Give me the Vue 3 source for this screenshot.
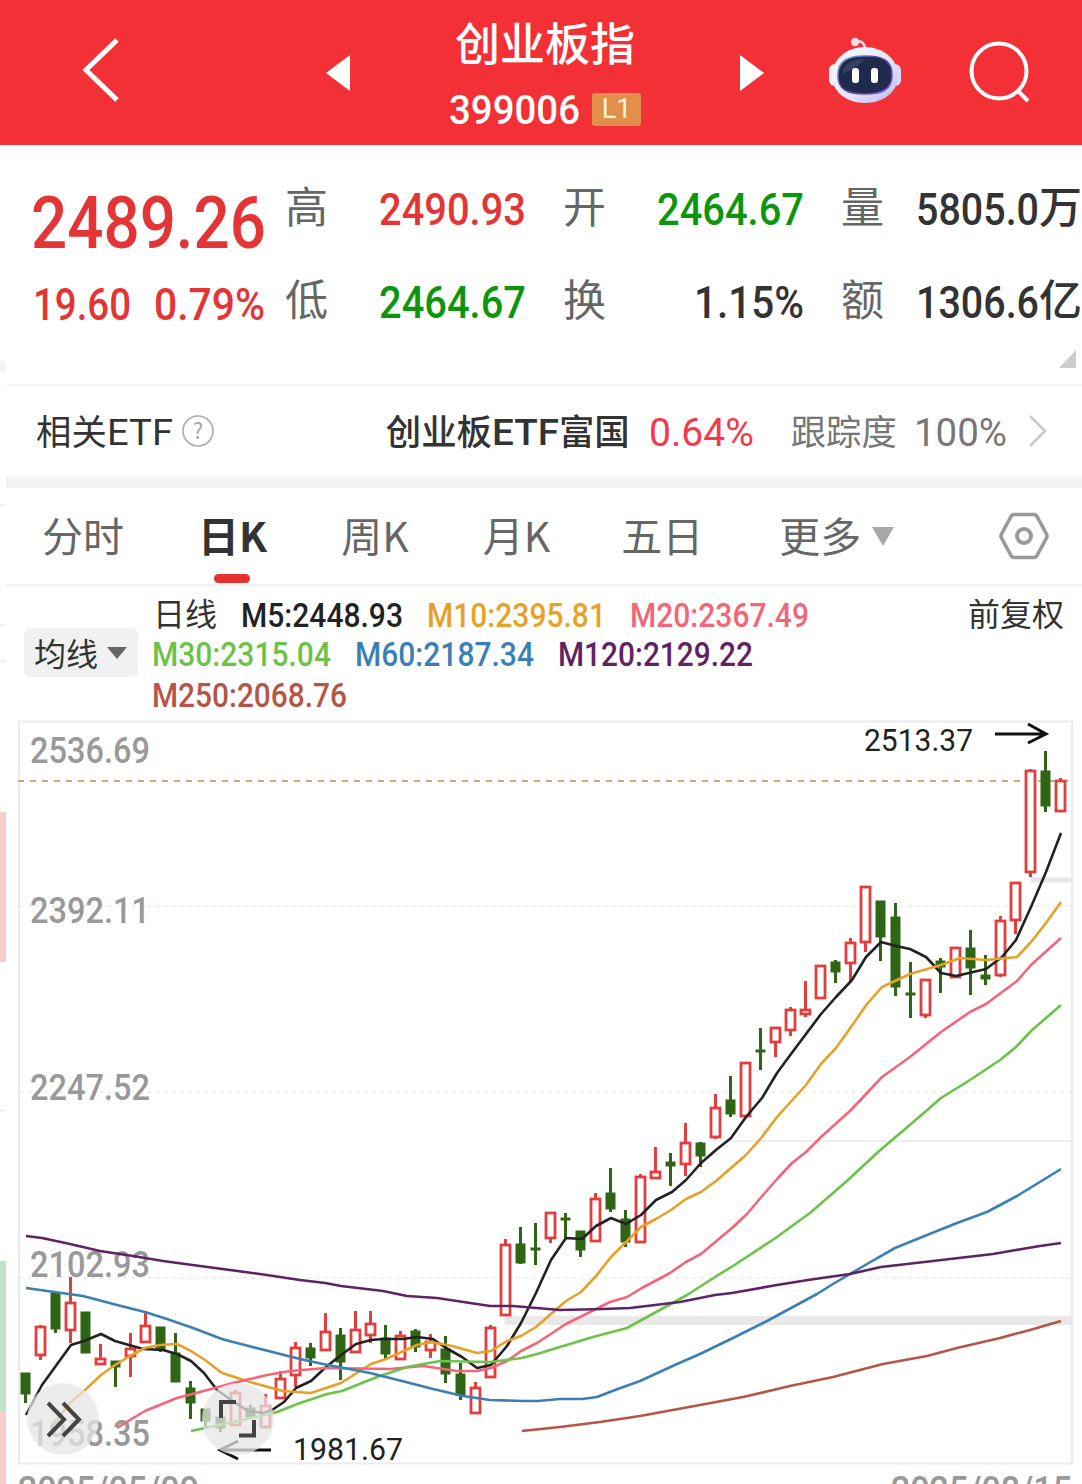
<script setup>
import { h } from 'vue'

// narrow digits: the text is squeezed to a fixed width, its baseline is the bottom edge
const Num = (props) => h('svg', { class: 'num', width: props.w, height: props.size * 0.75 }, [
    h('text', {
        x: 0,
        y: props.size * 0.75,
        'font-size': props.size,
        textLength: props.w,
        lengthAdjust: 'spacingAndGlyphs'
    }, props.text)
])
Num.props = ['text', 'w', 'size']

const quotes = [
    { label: '高', value: '2490.93', w: 147, color: 'red' },
    { label: '开', value: '2464.67', w: 147, color: 'green' },
    { label: '量', value: '5805.0', w: 123, unit: '万', color: 'dark' },
    { label: '低', value: '2464.67', w: 147, color: 'green' },
    { label: '换', value: '1.15%', w: 110, color: 'dark' },
    { label: '额', value: '1306.6', w: 123, unit: '亿', color: 'dark' }
]

const tabs = ['分时', '日K', '周K', '月K', '五日', '更多']

const legend = [
    [
        { text: 'M5:2448.93', w: 162, cls: 'm5' },
        { text: 'M10:2395.81', w: 179, cls: 'm10' },
        { text: 'M20:2367.49', w: 179, cls: 'm20' }
    ],
    [
        { text: 'M30:2315.04', w: 179, cls: 'm30' },
        { text: 'M60:2187.34', w: 179, cls: 'm60' },
        { text: 'M120:2129.22', w: 195, cls: 'm120' }
    ],
    [{ text: 'M250:2068.76', w: 195, cls: 'm250' }]
]

// [up, top of body, bottom of body, high, low]
const candles = [
    [0, 1373, 1394, 1373, 1403], [1, 1326, 1356, 1325, 1360], [0, 1293, 1329, 1293, 1333],
    [1, 1302, 1331, 1277, 1343], [0, 1312, 1353, 1312, 1353], [1, 1358, 1365, 1344, 1365],
    [0, 1361, 1367, 1361, 1387], [1, 1348, 1357, 1333, 1377], [1, 1325, 1343, 1311, 1343],
    [0, 1327, 1350, 1327, 1352], [0, 1353, 1382, 1333, 1382], [0, 1388, 1403, 1381, 1419],
    [0, 1409, 1421, 1409, 1427], [0, 1417, 1428, 1413, 1432], [1, 1392, 1426, 1390, 1426],
    [0, 1408, 1417, 1405, 1419], [1, 1405, 1428, 1394, 1428], [1, 1378, 1399, 1371, 1399],
    [1, 1347, 1376, 1342, 1387], [0, 1348, 1358, 1343, 1366], [1, 1331, 1351, 1313, 1351],
    [0, 1335, 1362, 1328, 1380], [1, 1329, 1353, 1311, 1353], [1, 1323, 1336, 1311, 1343],
    [0, 1338, 1354, 1325, 1360], [1, 1335, 1360, 1331, 1360], [0, 1331, 1347, 1329, 1352],
    [1, 1341, 1351, 1334, 1358], [0, 1349, 1374, 1336, 1383], [0, 1374, 1395, 1363, 1400],
    [1, 1387, 1414, 1382, 1414], [1, 1327, 1378, 1325, 1378], [1, 1244, 1316, 1239, 1316],
    [0, 1244, 1263, 1227, 1264], [0, 1248, 1250, 1223, 1265], [1, 1212, 1239, 1212, 1243],
    [0, 1218, 1220, 1213, 1238], [0, 1231, 1250, 1231, 1257], [1, 1198, 1242, 1193, 1242],
    [0, 1193, 1209, 1168, 1212], [0, 1219, 1242, 1210, 1247], [1, 1176, 1243, 1174, 1243],
    [1, 1171, 1179, 1147, 1179], [0, 1162, 1166, 1153, 1186], [1, 1142, 1165, 1123, 1176],
    [0, 1143, 1156, 1142, 1167], [1, 1107, 1138, 1094, 1139], [0, 1100, 1114, 1076, 1117],
    [1, 1062, 1117, 1062, 1117], [0, 1050, 1052, 1028, 1070], [1, 1027, 1043, 1027, 1057],
    [1, 1009, 1031, 1007, 1036], [1, 1009, 1015, 981, 1017], [1, 965, 999, 965, 999],
    [0, 962, 972, 960, 983], [1, 942, 964, 938, 981], [1, 886, 943, 886, 952],
    [0, 901, 937, 901, 961], [0, 917, 987, 903, 996], [0, 993, 995, 962, 1018],
    [1, 979, 1016, 979, 1018], [0, 961, 967, 958, 993], [1, 947, 978, 947, 978],
    [0, 948, 968, 930, 995], [0, 975, 979, 955, 985], [1, 920, 976, 916, 977],
    [1, 882, 921, 882, 934], [1, 770, 873, 769, 877], [0, 771, 806, 751, 812],
    [1, 780, 812, 778, 812]
].map(([up, top, bottom, high, low], i) => ({ up, top, bottom, high, low, x: 25.5 + i * 15 }))

const lines = [
    { cls: 'm5', points: '26,1415 42,1385 71,1345 84,1341 101,1334 115,1341 143,1349 163,1350 177,1354 191,1361 204,1373 217,1390 234,1402 248,1411 263,1413 272,1410 284,1402 296,1388 311,1381 326,1367 341,1355 356,1344 371,1340 383,1339 403,1339 417,1337 433,1339 446,1348 462,1357 477,1368 491,1365 507,1346 521,1323 536,1293 551,1260 566,1238 582,1239 596,1226 611,1218 626,1224 641,1215 656,1200 672,1192 686,1180 701,1163 716,1150 731,1138 746,1117 762,1098 777,1073 791,1054 821,1014 836,997 852,980 866,957 881,942 896,946 910,949 926,957 941,973 956,976 986,969 1002,957 1016,940 1031,907 1046,872 1061,833' },
    { cls: 'm10', points: '55,1422 70,1403 85,1390 101,1375 115,1365 130,1356 145,1348 160,1345 177,1344 191,1351 205,1360 222,1373 250,1382 283,1391 311,1393 341,1383 371,1364 386,1359 417,1345 431,1342 452,1346 477,1353 491,1351 507,1341 521,1336 536,1327 566,1301 581,1292 596,1276 611,1257 641,1227 656,1219 671,1210 686,1199 701,1192 716,1181 746,1155 762,1137 777,1117 806,1085 821,1064 836,1048 851,1027 867,1004 882,987 910,974 941,965 960,958 986,960 1017,957 1031,942 1046,923 1061,902' },
    { cls: 'm20', points: '117,1428 130,1420 145,1411 177,1398 200,1392 233,1383 267,1375 290,1371 326,1368 390,1369 423,1366 457,1371 477,1371 491,1368 507,1361 521,1351 537,1343 566,1324 610,1302 627,1297 642,1288 670,1273 686,1262 701,1254 720,1238 732,1228 747,1214 763,1195 778,1178 792,1163 806,1152 821,1137 851,1110 882,1077 910,1057 941,1032 970,1012 986,1004 1017,981 1031,965 1061,938' },
    { cls: 'm30', points: '191,1431 233,1422 277,1412 300,1403 327,1394 342,1391 377,1377 407,1367 440,1361 490,1362 522,1358 537,1354 560,1347 593,1337 627,1328 658,1311 687,1295 715,1277 733,1266 777,1237 792,1226 810,1213 848,1180 878,1152 918,1118 941,1098 970,1080 1000,1060 1016,1047 1031,1031 1061,1005' },
    { cls: 'm60', points: '26,1288 83,1296 117,1305 145,1312 167,1319 193,1328 222,1339 233,1342 300,1359 323,1364 370,1373 402,1381 433,1389 463,1396 490,1400 523,1401 538,1401 560,1399 582,1399 597,1397 615,1390 640,1381 677,1364 700,1354 733,1338 767,1321 817,1294 833,1284 867,1264 895,1248 927,1235 957,1223 987,1212 1017,1196 1061,1169' },
    { cls: 'm120', points: '26,1236 42,1238 70,1244 100,1251 133,1256 163,1261 200,1266 260,1274 300,1280 325,1283 341,1286 383,1291 407,1296 437,1298 490,1306 513,1306 560,1310 603,1309 630,1308 680,1302 715,1295 732,1293 777,1285 808,1280 850,1274 881,1267 933,1261 993,1254 1016,1250 1040,1246 1061,1243' },
    { cls: 'm250', points: '522,1431 560,1427 600,1422 640,1416 700,1405 743,1397 790,1386 833,1377 883,1364 927,1356 957,1348 1000,1338 1030,1330 1061,1321' }
]

const axis = [
    { text: '2536.69', y: 763 },
    { text: '2392.11', y: 923 },
    { text: '2247.52', y: 1100 },
    { text: '2102.93', y: 1277 },
    { text: '1958.35', y: 1446 }
]
</script>

<template>
    <div class="page">
        <header class="header">
            <svg class="back" width="44" height="70" viewBox="0 0 44 70">
                <path d="M38 5 L7 35 L38 65" fill="none" stroke="#fff" stroke-width="5" />
            </svg>
            <svg class="prev" width="24" height="36" viewBox="0 0 24 36"><path d="M24 0 V36 L0 18 Z" fill="#fff" /></svg>
            <div class="title">
                <div class="name">创业板指</div>
                <div class="code">
                    <Num text="399006" :w="131" :size="41" />
                    <span class="level">L1</span>
                </div>
            </div>
            <svg class="next" width="24" height="36" viewBox="0 0 24 36"><path d="M0 0 V36 L24 18 Z" fill="#fff" /></svg>
            <svg class="robot" width="76" height="70" viewBox="0 0 76 70">
                <defs>
                    <linearGradient id="shell" x1="0" y1="0" x2="1" y2="1">
                        <stop offset="0" stop-color="#fff" />
                        <stop offset="0.6" stop-color="#e4e2f8" />
                        <stop offset="1" stop-color="#b9b6ec" />
                    </linearGradient>
                    <linearGradient id="rim" x1="0" y1="0" x2="1" y2="1">
                        <stop offset="0" stop-color="#7fc4dd" />
                        <stop offset="0.4" stop-color="#4a3a9a" />
                        <stop offset="1" stop-color="#7c50d8" />
                    </linearGradient>
                </defs>
                <path d="M26 6 Q35 3 36 13" fill="none" stroke="#f6dfe6" stroke-width="2.6" />
                <circle cx="26" cy="6" r="4.2" fill="#fbdde2" />
                <rect x="0" y="28" width="12" height="22" rx="6" fill="#f3effb" />
                <rect x="60" y="28" width="12" height="22" rx="6" fill="#dcd8f5" />
                <path d="M36 11 C54 11 69 23 69 40 C69 56 54 67 36 67 C18 67 3 56 3 40 C3 23 18 11 36 11 Z" fill="url(#shell)" />
                <path d="M36 20 C54 20 63 25 63 39 C63 53 54 58 36 58 C18 58 9 53 9 39 C9 25 18 20 36 20 Z" fill="#202a4c" stroke="url(#rim)" stroke-width="1.6" />
                <path d="M14 34 Q19 23 36 23 Q29 31 14 38 Z" fill="#364060" />
                <rect x="23" y="32" width="7" height="15" rx="3" fill="#fff" />
                <rect x="42" y="32" width="7" height="15" rx="3" fill="#fff" />
            </svg>
            <svg class="search" width="64" height="64" viewBox="0 0 64 64">
                <circle cx="31" cy="30" r="27.5" fill="none" stroke="#fff" stroke-width="4" />
                <path d="M49 49 L60 60" stroke="#fff" stroke-width="4" />
            </svg>
        </header>

        <div class="quote">
            <div class="price red">
                <Num text="2489.26" :w="235" :size="73" />
                <div class="change">
                    <Num text="19.60" :w="98" :size="45" />
                    <Num text="0.79%" :w="111" :size="45" />
                </div>
            </div>
            <div class="quoteGrid">
                <div v-for="item in quotes" :key="item.label" class="cell">
                    <span class="label">{{ item.label }}</span>
                    <span class="value" :class="item.color"><Num :text="item.value" :w="item.w" :size="45" />{{ item.unit }}</span>
                </div>
            </div>
            <i class="corner"></i>
        </div>

        <div class="etf">
            <span class="etfTitle">相关<Num text="ETF" :w="66" :size="37" /></span>
            <svg class="help" width="34" height="34" viewBox="0 0 34 34">
                <circle cx="17" cy="17" r="15" fill="none" stroke="#aaa" stroke-width="1.6" />
                <text x="17" y="25" text-anchor="middle" font-size="22" fill="#aaa">?</text>
            </svg>
            <span class="etfName">创业板<Num text="ETF" :w="67" :size="37" />富国</span>
            <Num class="etfRate" text="0.64%" :w="105" :size="38" />
            <span class="etfTrack">跟踪度</span>
            <Num class="etfPercent" text="100%" :w="93" :size="38" />
            <svg class="more" width="20" height="34" viewBox="0 0 20 34">
                <path d="M2 2 L17 17 L2 32" fill="none" stroke="#c8c8c8" stroke-width="2.6" />
            </svg>
        </div>

        <nav class="tabs">
            <div v-for="(tab, i) in tabs" :key="tab" class="tab" :class="{ active: i === 1 }">{{ tab }}</div>
            <i class="tabArrow"></i>
            <svg class="setting" width="52" height="50" viewBox="0 0 52 50">
                <path d="M16 3.5 H36 Q38 3.5 39 5.5 L48.5 23 Q49.5 25 48.5 27 L39 44.5 Q38 46.5 36 46.5 H16 Q14 46.5 13 44.5 L3.5 27 Q2.5 25 3.5 23 L13 5.5 Q14 3.5 16 3.5 Z" fill="none" stroke="#999" stroke-width="3.6" />
                <circle cx="26" cy="25" r="7" fill="none" stroke="#999" stroke-width="4" />
            </svg>
        </nav>

        <div class="legend">
            <div class="maButton">均线<i></i></div>
            <div class="legendRows">
                <div v-for="(row, i) in legend" :key="i" class="legendRow">
                    <span v-if="i === 0" class="dayLine">日线</span>
                    <Num v-for="item in row" :key="item.text" :class="item.cls" :text="item.text" :w="item.w" :size="34" />
                </div>
            </div>
            <div class="adjust">前复权</div>
        </div>

        <svg class="chart" width="1082" height="768" viewBox="0 716 1082 768">
            <rect x="19" y="721.5" width="1053" height="742" fill="none" stroke="#ebebeb" stroke-width="2" />
            <g stroke="#ededed" stroke-width="2" stroke-dasharray="3 5">
                <path d="M20 906 H1071" />
                <path d="M20 1092 H1071" />
                <path d="M20 1278 H1071" />
            </g>
            <path d="M1031 880 H1072" stroke="#e6e6e6" stroke-width="5" />
            <path d="M728 1141 H1072" stroke="#e8e8e8" stroke-width="1.6" />
            <path d="M505 1320.5 H1072" stroke="#e9e9e9" stroke-width="9" />
            <path d="M18 781 H1071" stroke="#cdaa7c" stroke-width="2" stroke-dasharray="6 6" />

            <g v-for="c in candles" :key="c.x" :class="c.up ? 'up' : 'down'">
                <path :d="`M${c.x} ${c.high} V${c.top} M${c.x} ${c.bottom} V${c.low}`" stroke-width="3" />
                <rect v-if="c.up" :x="c.x - 4.5" :y="c.top + 1" width="9" :height="c.bottom - c.top - 2" stroke-width="2.8" />
                <rect v-else :x="c.x - 4.5" :y="c.top" width="9" :height="c.bottom - c.top" />
            </g>

            <text v-for="a in axis" :key="a.text" class="axis" x="30" :y="a.y" textLength="120" lengthAdjust="spacingAndGlyphs">{{ a.text }}</text>
            <polyline v-for="line in lines" :key="line.cls" class="line" :class="line.cls" :points="line.points" />

            <g class="mark">
                <text x="864" y="751" textLength="109" lengthAdjust="spacingAndGlyphs">2513.37</text>
                <path d="M995 734 H1045 M1028 724 L1046 734 L1028 743" />
                <text x="293" y="1460" textLength="110" lengthAdjust="spacingAndGlyphs">1981.67</text>
                <path d="M271 1450 H221 M238 1441 L220 1450 L238 1459" />
            </g>

            <g class="tool">
                <circle cx="63" cy="1419" r="36" />
                <path d="M48 1403 L64 1419.5 L48 1436 M63 1403 L79 1419.5 L63 1436" />
                <circle cx="238" cy="1419" r="36" />
                <path d="M236 1402 H221 V1418 M239 1435.5 H254 V1420" />
            </g>

            <text class="axis" x="18" y="1502" textLength="181" lengthAdjust="spacingAndGlyphs">2025/05/09</text>
            <text class="axis" x="891" y="1502" textLength="181" lengthAdjust="spacingAndGlyphs">2025/08/15</text>
        </svg>

        <!-- edge of the previous page -->
        <svg class="edge" width="6" height="1339" viewBox="0 145 6 1339">
            <path d="M0 145 H6 V1484 H0 Z" fill="#fff" />
            <path d="M0 361 H6 V373 H0 Z" fill="#f4f4f4" />
            <path d="M0 505 H6 M0 625 H6 M0 661 H6 M0 1110.5 H6" stroke="#eee" stroke-width="1.5" />
            <path d="M0 812 H6 V962 H0 Z M0 1411 H6 V1484 H0 Z" fill="#f8cdce" />
            <path d="M0 1261 H6 V1411 H0 Z" fill="#bfe6c4" />
        </svg>
    </div>
</template>

<style>
body {
    margin: 0;
    overflow: hidden;
}
</style>

<style scoped>
.page {
    position: relative;
    width: 1082px;
    height: 1484px;
    overflow: hidden;
    background: #fff;
    color: #333;
    font-family: Roboto, "Noto Sans CJK SC", sans-serif;
}

svg {
    flex: none;
    display: block;
}

.num {
    display: inline-block;
    flex: none;
    overflow: visible;
    fill: currentColor;
    font-family: Roboto, sans-serif;
    font-weight: 500;
}

.red {
    color: #e33535;
}

.green {
    color: #0d960d;
}

.dark {
    color: #333;
}

.header {
    display: flex;
    height: 145px;
    background: #f23036;
    color: #fff;
}

.back {
    margin: 35px 0 0 79px;
}

.prev {
    margin: 55px 0 0 203px;
}

.title {
    width: 390px;
    text-align: center;
}

.name {
    height: 60px;
    margin-top: 12px;
    font: 500 45px/60px "Noto Sans CJK SC", sans-serif;
}

.code {
    display: flex;
    align-items: flex-end;
    justify-content: center;
    height: 52px;
    gap: 12px;
}

.level {
    width: 49px;
    height: 33px;
    margin-bottom: -2px;
    border-radius: 3px;
    background: #e18f49;
    color: #fff3e0;
    font-size: 27px;
    line-height: 32px;
}

.next {
    margin: 55px 0 0;
}

.robot {
    margin: 36px 0 0 65px;
}

.search {
    margin: 41px 0 0 63px;
}

.quote {
    position: relative;
    display: flex;
    height: 241px;
    box-sizing: border-box;
    border-bottom: 2px solid #f6f6f6;
}

.price {
    width: 256px;
    padding: 48px 0 0 31px;
}

.price > .num {
    display: block;
}

.change {
    display: flex;
    gap: 23px;
    margin: 38px 0 0 2px;
}

.quoteGrid {
    display: grid;
    grid-template-columns: repeat(3, 241px);
    grid-auto-rows: 93px;
    column-gap: 37px;
    padding-top: 13px;
}

.cell {
    display: flex;
    justify-content: space-between;
    align-items: baseline;
    font: 400 43px/93px "Noto Sans CJK SC", sans-serif;
    white-space: nowrap;
}

.label {
    color: #666;
}

.value.dark {
    font-weight: 500;
}

.cell .num {
    margin-bottom: -2px;
}

.corner {
    position: absolute;
    right: 6px;
    bottom: 16px;
    border-left: 17px solid transparent;
    border-bottom: 18px solid #ccc;
}

.etf {
    display: flex;
    align-items: baseline;
    height: 90px;
    padding-left: 36px;
    border-bottom: 12px solid #f4f4f4;
    font: 400 35.4px/87px "Noto Sans CJK SC", sans-serif;
    white-space: nowrap;
}

.etfTitle .num,
.etfPercent {
    font-weight: 400;
}

.help {
    align-self: center;
    margin-left: 8px;
}

.etfName {
    margin-left: 171px;
    font-weight: 500;
}

.etfRate {
    margin-left: 19px;
    color: #f5384a;
    font-weight: 400;
}

.etfTrack {
    margin-left: 37px;
    color: #777;
}

.etfPercent {
    margin-left: 17px;
    color: #777;
}

.more {
    align-self: center;
    margin-left: 21px;
}

.tabs {
    display: flex;
    align-items: center;
    height: 96px;
    padding-left: 42px;
    border-bottom: 2px solid #f2f2f2;
    color: #666;
    font: 400 41px/92px "Noto Sans CJK SC", sans-serif;
}

.tab {
    position: relative;
    flex: none;
    height: 96px;
    margin-right: 74px;
}

.tab:nth-child(4) {
    margin-right: 71px;
}

.tab:nth-child(5) {
    margin-right: 76px;
}

.tab:nth-child(6) {
    margin-right: 11px;
}

.tab.active {
    color: #333;
    font-weight: 700;
}

.tab.active::after {
    content: "";
    position: absolute;
    left: 16px;
    bottom: 1px;
    width: 36px;
    height: 9px;
    border-radius: 5px;
    background: #e63131;
}

.tabArrow {
    border: 11px solid transparent;
    border-top: 19px solid #a8a8a8;
    border-bottom: 0;
}

.setting {
    margin-left: 104px;
}

.legend {
    display: flex;
    height: 130px;
}

.maButton {
    display: flex;
    align-items: center;
    gap: 9px;
    width: 104px;
    height: 49px;
    margin: 42px 0 0 24px;
    padding-left: 10px;
    border-radius: 6px;
    background: #f1f1f1;
    font: 400 32px/47px "Noto Sans CJK SC", sans-serif;
}

.maButton i {
    border: 10px solid transparent;
    border-top: 12px solid #666;
    border-bottom: 0;
}

.legendRows {
    width: 816px;
    padding: 6px 0 0 14px;
}

.legendRow {
    display: flex;
    align-items: baseline;
    gap: 24px;
    height: 41px;
    font: 400 32px/41px "Noto Sans CJK SC", sans-serif;
}

.legendRow .num {
    margin-bottom: 1px;
}

.legendRow:not(:first-child) {
    align-items: flex-end;
    height: 33px;
    padding-bottom: 8px;
}

.dayLine {
    margin-left: 1px;
}

.adjust {
    padding-top: 6px;
    font: 400 32px/41px "Noto Sans CJK SC", sans-serif;
    white-space: nowrap;
}

.m5 { color: #222; }
.m10 { color: #e7a128; }
.m20 { color: #f36679; }
.m30 { color: #6cc24a; }
.m60 { color: #3b7fb5; }
.m120 { color: #5f2364; }
.m250 { color: #b65545; }

.line {
    fill: none;
    stroke: currentColor;
    stroke-width: 2.6;
    stroke-linejoin: round;
}

.up {
    fill: #fff;
    stroke: #e33e3e;
}

.down {
    stroke: #2f6615;
}

.down rect {
    fill: #2f6615;
    stroke-width: 1;
}

.axis {
    fill: #999;
    font: 500 36px Roboto, sans-serif;
}

.mark text {
    fill: #222;
    font: 400 31px Roboto, sans-serif;
}

.mark path {
    fill: none;
    stroke: #111;
    stroke-width: 3;
}

.tool circle {
    fill: rgba(230, 230, 230, 0.75);
}

.tool path {
    fill: none;
    stroke: #444;
    stroke-width: 4;
}

.edge {
    position: absolute;
    left: 0;
    top: 145px;
}
</style>
